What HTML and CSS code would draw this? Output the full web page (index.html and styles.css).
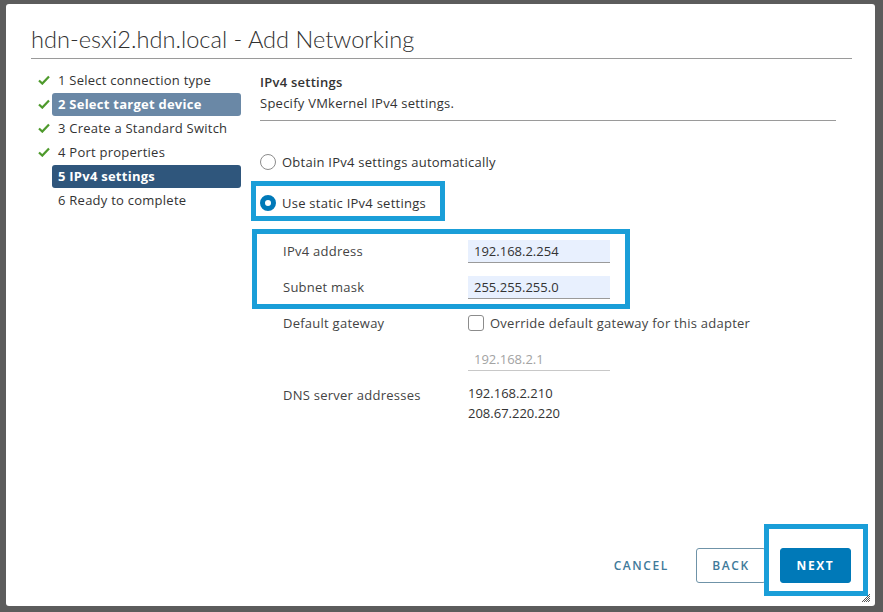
FILE: index.html
```html
<!DOCTYPE html>
<html lang="en">
<head>
    <meta charset="UTF-8">
    <meta name="viewport" content="width=device-width, initial-scale=1.0">
    <title>Add Networking</title>
    <link rel="stylesheet" href="styles.css">
</head>
<body>
    <div class="modal">
        <!-- Header -->
        <div class="modal-header">
            <h1 class="modal-title">hdn-esxi2.hdn.local - Add Networking</h1>
        </div>

        <div class="modal-body">
            <!-- Wizard steps -->
            <ul class="steps">
                <li class="step done">
                    <span class="check"><svg viewBox="0 0 12 10" width="12" height="10"><path d="M1 5.5 L4.3 8.6 L11 1.6" fill="none" stroke="#4e9a2c" stroke-width="2.2"/></svg></span>
                    <span class="step-label">1 Select connection type</span>
                </li>
                <li class="step done visited">
                    <span class="check"><svg viewBox="0 0 12 10" width="12" height="10"><path d="M1 5.5 L4.3 8.6 L11 1.6" fill="none" stroke="#4e9a2c" stroke-width="2.2"/></svg></span>
                    <span class="step-label">2 Select target device</span>
                </li>
                <li class="step done">
                    <span class="check"><svg viewBox="0 0 12 10" width="12" height="10"><path d="M1 5.5 L4.3 8.6 L11 1.6" fill="none" stroke="#4e9a2c" stroke-width="2.2"/></svg></span>
                    <span class="step-label">3 Create a Standard Switch</span>
                </li>
                <li class="step done">
                    <span class="check"><svg viewBox="0 0 12 10" width="12" height="10"><path d="M1 5.5 L4.3 8.6 L11 1.6" fill="none" stroke="#4e9a2c" stroke-width="2.2"/></svg></span>
                    <span class="step-label">4 Port properties</span>
                </li>
                <li class="step active">
                    <span class="check"></span>
                    <span class="step-label">5 IPv4 settings</span>
                </li>
                <li class="step">
                    <span class="check"></span>
                    <span class="step-label">6 Ready to complete</span>
                </li>
            </ul>

            <!-- Step content -->
            <div class="content">
                <div class="content-head">
                    <div class="content-title">IPv4 settings</div>
                    <div class="content-desc">Specify VMkernel IPv4 settings.</div>
                </div>

                <div class="radio-row">
                    <span class="radio"></span>
                    <span>Obtain IPv4 settings automatically</span>
                </div>
                <div class="radio-row marked">
                    <span class="radio checked"></span>
                    <span>Use static IPv4 settings</span>
                </div>

                <div class="field-group">
                    <div class="field-row">
                        <span class="field-label">IPv4 address</span>
                        <span class="input filled">192.168.2.254</span>
                    </div>
                    <div class="field-row">
                        <span class="field-label">Subnet mask</span>
                        <span class="input filled">255.255.255.0</span>
                    </div>
                </div>

                <div class="field-row">
                    <span class="field-label">Default gateway</span>
                    <span class="checkbox-wrap">
                        <span class="checkbox"></span>
                        <span>Override default gateway for this adapter</span>
                    </span>
                </div>
                <div class="field-row">
                    <span class="field-label"></span>
                    <span class="input disabled">192.168.2.1</span>
                </div>
                <div class="field-row dns">
                    <span class="field-label">DNS server addresses</span>
                    <span class="dns-list">
                        <span>192.168.2.210</span>
                        <span>208.67.220.220</span>
                    </span>
                </div>
            </div>
        </div>

        <!-- Footer -->
        <div class="modal-footer">
            <button class="btn btn-link">CANCEL</button>
            <button class="btn btn-outline">BACK</button>
            <span class="next-mark">
                <button class="btn btn-primary">NEXT</button>
            </span>
        </div>

        <svg class="resize-grip" viewBox="0 0 10 10" width="10" height="10">
            <path d="M9 3 L3 9 M9 5 L5 9 M9 7 L7 9 M9 1 L1 9" stroke="#555" stroke-width="1"/>
        </svg>
    </div>
</body>
</html>
```

FILE: styles.css
```css
/* Reset */
* {
    margin: 0;
    padding: 0;
    box-sizing: border-box;
}

body {
    background-color: #5c5c5c;
    font-family: 'Open Sans', 'Noto Sans', sans-serif;
    color: #333;
    padding: 4px 0 0 6px;
    height: 612px;
    overflow: hidden;
}

/* Modal */
.modal {
    position: relative;
    width: 869px;
    height: 602px;
    background-color: #fff;
    border-radius: 3px;
    display: flex;
    flex-direction: column;
    padding: 0 23px 0 25px;
}

.modal-header {
    height: 55px;
    border-bottom: 1px solid #9a9a9a;
    display: flex;
    align-items: flex-end;
    padding-bottom: 5px;
}

.modal-title {
    font-family: 'Lato', sans-serif;
    font-weight: 300;
    font-size: 23.6px;
    color: #313131;
}

.modal-body {
    flex: 1;
    display: flex;
    letter-spacing: 0.25px;
}

/* Steps */
.steps {
    list-style: none;
    width: 229px;
    padding: 9px 19px 0 7px;
    flex-shrink: 0;
}

.step {
    display: flex;
    align-items: center;
    height: 24px;
    font-size: 13px;
    color: #333;
}

.check {
    width: 14px;
    display: flex;
    align-items: center;
}

.step-label {
    flex: 1;
    height: 23px;
    line-height: 23px;
    padding: 0 6px;
    border-radius: 3px;
    white-space: nowrap;
}

.step.visited .step-label {
    background-color: #6a88a6;
    color: #fff;
    font-weight: bold;
}

.step.active .step-label {
    background-color: #2f567c;
    color: #fff;
    font-weight: bold;
}

/* Content */
.content {
    flex: 1;
    padding: 14px 16px 0 0;
    font-size: 13px;
}

.content-head {
    border-bottom: 1px solid #9a9a9a;
    padding-bottom: 6px;
    margin-bottom: 30px;
}

.content-title {
    font-weight: 600;
    line-height: 19px;
}

.content-desc {
    line-height: 22px;
}

.radio-row {
    display: flex;
    align-items: center;
    gap: 6px;
    height: 22px;
    width: fit-content;
}

.radio-row.marked {
    height: 30px;
    margin: 13px 0 17px -4px;
    padding: 4px 14px 0 4px;
    outline: 5px solid #1a9ed8;
}

.radio {
    width: 16px;
    height: 16px;
    border: 1px solid #8c8c8c;
    border-radius: 50%;
    flex-shrink: 0;
}

.radio.checked {
    border: 5px solid #0079b8;
    background-color: #fff;
}

/* Fields */
.field-group {
    width: 370px;
    margin-left: -4px;
    padding-left: 4px;
    outline: 5px solid #1a9ed8;
    outline-offset: -1px;
}

.field-row {
    display: flex;
    align-items: center;
    height: 36px;
}

.field-label {
    width: 208px;
    padding-left: 23px;
    flex-shrink: 0;
    color: #444;
}

.input {
    display: block;
    width: 142px;
    height: 23px;
    line-height: 22px;
    padding: 0 6px;
    border-bottom: 1px solid #9a9a9a;
    color: #333;
    letter-spacing: 0;
}

.input.filled {
    background-color: #e8f0fe;
}

.input.disabled {
    color: #a3a3a3;
    border-bottom-color: #c8c8c8;
}

.checkbox-wrap {
    display: flex;
    align-items: center;
    gap: 6px;
    color: #444;
}

.checkbox {
    width: 16px;
    height: 16px;
    border: 1px solid #8c8c8c;
    border-radius: 3px;
}

.field-row.dns {
    align-items: flex-start;
    height: auto;
    padding-top: 6px;
}

.field-row.dns .field-label {
    line-height: 20px;
    padding-top: 2px;
}

.dns-list {
    display: flex;
    flex-direction: column;
    line-height: 20px;
    letter-spacing: 0;
}

/* Footer */
.modal-footer {
    display: flex;
    justify-content: flex-end;
    align-items: flex-end;
    gap: 14px;
    height: 93px;
    padding-bottom: 23px;
    padding-right: 1px;
}

.btn {
    font-family: 'Open Sans', sans-serif;
    font-size: 12px;
    letter-spacing: 1.6px;
    height: 35px;
    padding: 0 12px;
    border-radius: 3px;
    background: none;
    border: 1px solid transparent;
    cursor: pointer;
}

.btn-link {
    color: #3f7a9a;
    font-weight: 600;
}

.btn-outline {
    width: 70px;
    color: #3f7a9a;
    border-color: #6f93a8;
    font-weight: 600;
}

.btn-primary {
    width: 71px;
    background-color: #0079b8;
    border-color: #0079b8;
    color: #fff;
    font-weight: bold;
}

.next-mark {
    position: relative;
    display: flex;
}

.next-mark::after {
    content: "";
    position: absolute;
    top: -24px;
    right: -17px;
    bottom: -13px;
    left: -16px;
    border: 5px solid #1a9ed8;
}

.resize-grip {
    position: absolute;
    right: 4px;
    bottom: 3px;
}
```
